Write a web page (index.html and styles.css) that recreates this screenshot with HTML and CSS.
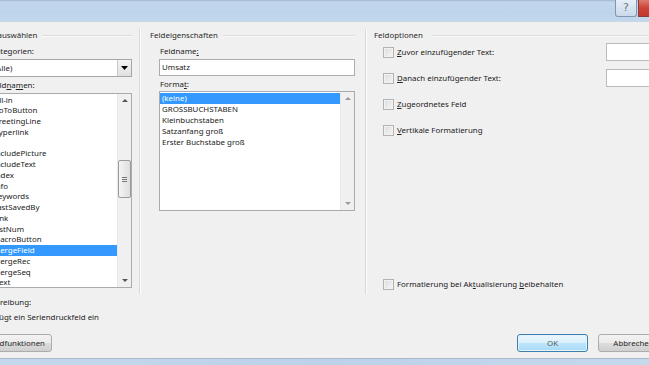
FILE: index.html
```html
<!DOCTYPE html>
<html lang="de">
<head>
<meta charset="utf-8">
<title>Feld</title>
<link rel="stylesheet" href="styles.css">
</head>
<body>
<div class="window">
  <div class="titlebar">
    <div class="tb-help">?</div>
    <div class="tb-close"></div>
  </div>
  <div class="client">
    <div class="panels">
      <div class="col col1">
        <div class="group-title"><span>Feld auswählen</span><i></i></div>
        <div class="label">Kategorien:</div>
        <div class="select">
          <span class="select-val">(Alle)</span>
          <span class="select-btn"><svg width="7" height="4" viewBox="0 0 7 4"><path d="M0 0h7L3.5 4z" fill="#000"/></svg></span>
        </div>
        <div class="label">Feld<u>n</u>a<u>m</u>en:</div>
        <div class="listbox list-fields">
          <ul class="items">
            <li>Fill-in</li>
            <li>GoToButton</li>
            <li>GreetingLine</li>
            <li>Hyperlink</li>
            <li>If</li>
            <li>IncludePicture</li>
            <li>IncludeText</li>
            <li>Index</li>
            <li>Info</li>
            <li>Keywords</li>
            <li>LastSavedBy</li>
            <li>Link</li>
            <li>ListNum</li>
            <li>MacroButton</li>
            <li class="sel">MergeField</li>
            <li>MergeRec</li>
            <li>MergeSeq</li>
            <li>Next</li>
          </ul>
          <div class="vscroll">
            <span class="arr up"></span>
            <span class="track"><span class="thumb"><b></b><b></b><b></b></span></span>
            <span class="arr down"></span>
          </div>
        </div>
      </div>
      <div class="col col2">
        <div class="group-title"><span>Feldeigenschaften</span><i></i></div>
        <div class="label">Feldname<u>:</u></div>
        <div class="textbox">Umsatz</div>
        <div class="label">Forma<u>t</u>:</div>
        <div class="listbox list-format">
          <ul class="items">
            <li class="sel">(keine)</li>
            <li>GROSSBUCHSTABEN</li>
            <li>Kleinbuchstaben</li>
            <li>Satzanfang groß</li>
            <li>Erster Buchstabe groß</li>
          </ul>
          <div class="vscroll disabled">
            <span class="arr up"></span>
            <span class="track"></span>
            <span class="arr down"></span>
          </div>
        </div>
      </div>
      <div class="col col3">
        <div class="group-title"><span>Feldoptionen</span><i></i></div>
        <div class="opt first"><span class="cb"></span><span class="opt-text"><u>Z</u>uvor einzufügender Text:</span><span class="opt-input"></span></div>
        <div class="opt"><span class="cb"></span><span class="opt-text"><u>D</u>anach einzufügender Text:</span><span class="opt-input"></span></div>
        <div class="opt"><span class="cb"></span><span class="opt-text"><u>Z</u>ugeordnetes Feld</span></div>
        <div class="opt"><span class="cb"></span><span class="opt-text"><u>V</u>ertikale Formatierung</span></div>
        <div class="opt last"><span class="cb"></span><span class="opt-text">Formatierung bei Ak<u>t</u>ualisierung <u>b</u>eibehalten</span></div>
      </div>
    </div>
    <div class="desc">
      <div class="desc-label">Beschreibung:</div>
      <div class="desc-text">Fügt ein Seriendruckfeld ein</div>
    </div>
    <div class="buttons">
      <div class="btn btn-fields">Feldfunktionen</div>
      <div class="btn btn-ok">OK</div>
      <div class="btn btn-cancel">Abbrechen</div>
    </div>
  </div>
  <div class="frame-bottom"></div>
</div>
</body>
</html>
```

FILE: styles.css
```css
* { box-sizing: border-box; }
html, body {
  margin: 0;
  padding: 0;
  width: 649px;
  height: 365px;
  overflow: hidden;
  background: #f0f0f0;
}
body {
  font-family: "Noto Sans", "Open Sans", sans-serif;
  font-size: 7.9px;
  color: #222;
}
u { text-decoration: underline; text-underline-offset: 1px; }

.window {
  margin-left: -30px;
  width: 711px;
  height: 365px;
  display: flex;
  flex-direction: column;
}

/* title bar: buttons laid out from the left, help starts at screen x 615 */
.titlebar {
  height: 22px;
  flex: none;
  display: flex;
  align-items: flex-start;
  gap: 1px;
  padding-left: 645px;
  background: linear-gradient(to bottom, #9fb8d3 0, #c2d7ec 2px, #bdd4ea 60%, #c3d8ed 100%);
  border-bottom: 1px solid #c9d6e3;
}
.tb-help {
  width: 22px;
  height: 17px;
  flex: none;
  border: 1px solid #8397ac;
  border-top: none;
  border-radius: 0 0 3px 3px;
  background: linear-gradient(to bottom, #e6eef7, #c9d9ea);
  color: #6b7785;
  font-family: "DejaVu Sans", sans-serif;
  font-size: 11px;
  line-height: 15px;
  text-align: center;
}
.tb-close {
  width: 43px;
  height: 17px;
  flex: none;
  border: 1px solid #8e3b3b;
  border-top: none;
  background: #c9463c linear-gradient(to bottom, #e07a70, #cc4238 50%, #c0392f);
}

/* client */
.client {
  flex: 1;
  display: flex;
  flex-direction: column;
}
.panels {
  display: flex;
  height: 265px;
  margin-top: 7px;
}
.col {
  display: flex;
  flex-direction: column;
}
.col1 {
  width: 169px;
  padding: 0 7px 0 10px;
}
.col2 {
  width: 226px;
  padding: 0 10px 0 10px;
  border-left: 1px solid #d9d9d9;
  box-shadow: inset 1px 0 0 #fbfbfb;
}
.col3 {
  flex: 1;
  padding: 0 0 0 8px;
  border-left: 1px solid #d9d9d9;
  box-shadow: inset 1px 0 0 #fbfbfb;
}

.group-title {
  height: 12px;
  display: flex;
  align-items: center;
  gap: 5px;
  line-height: 12px;
  color: #2a2a2a;
}
.col3 .group-title { gap: 9px; }
.group-title i {
  flex: 1;
  height: 1px;
  background: #dcdcdc;
  box-shadow: 0 1px 0 #fafafa;
}
.label {
  margin: 4px 0 0 11px;
  height: 12px;
  line-height: 12px;
}
.col2 .label { margin-left: 10px; }

/* select */
.select {
  margin: 2px 0 0 10px;
  height: 18px;
  border: 1px solid #a4a6ab;
  background: #fff;
  display: flex;
  align-items: center;
}
.select-val { flex: 1; padding-left: 3px; }
.select-btn {
  width: 14px;
  height: 16px;
  border-left: 1px solid #c9c9c9;
  background: linear-gradient(to bottom, #f4f4f4, #e1e1e1);
  display: flex;
  align-items: center;
  justify-content: center;
}
.col1 .label + .listbox { margin-top: 2px; }
.col1 .select + .label { margin-top: 2px; }

/* listbox */
.listbox {
  border: 1px solid #a9abb0;
  background: #fff;
  display: flex;
}
.list-fields {
  margin-left: 10px;
  height: 195px;
}
.list-format {
  margin: 1px 0 0 9px;
  height: 120px;
}
.items {
  list-style: none;
  margin: 0;
  padding: 0;
  flex: 1;
}
.list-fields .items { padding-top: 0.6px; }
.list-fields li {
  height: 10.76px;
  line-height: 10.76px;
  padding-left: 2px;
  white-space: nowrap;
}
.list-format .items { padding-top: 1px; }
.list-format li {
  height: 11px;
  line-height: 11px;
  padding-left: 2px;
  white-space: nowrap;
}
li.sel {
  background: #3399ff;
  color: #fff;
}

.vscroll {
  width: 14px;
  display: flex;
  flex-direction: column;
  background: #f0f0f0;
  border-left: 1px solid #e8e8e8;
}
.arr {
  height: 13px;
  display: flex;
  align-items: center;
  justify-content: center;
}
.arr::before {
  content: "";
  border-left: 3px solid transparent;
  border-right: 3px solid transparent;
}
.arr.up::before { border-bottom: 3px solid #555; }
.arr.down::before { border-top: 3px solid #555; }
.vscroll.disabled .arr.up::before { border-bottom-color: #9a9a9a; }
.vscroll.disabled .arr.down::before { border-top-color: #9a9a9a; }
.track {
  flex: 1;
  position: relative;
}
.thumb {
  position: absolute;
  left: 0;
  right: 0;
  top: 53px;
  height: 38px;
  border: 1px solid #9b9b9b;
  border-radius: 2px;
  background: linear-gradient(to right, #f4f4f4, #dedede);
  display: flex;
  flex-direction: column;
  align-items: center;
  justify-content: center;
  gap: 1px;
}
.thumb b {
  display: block;
  width: 5px;
  height: 1px;
  background: #777;
}

/* textbox */
.textbox {
  margin: 2px 0 0 9px;
  height: 17px;
  border: 1px solid #abadb3;
  background: #fff;
  padding-left: 2px;
  line-height: 15px;
}
.col2 .textbox + .label { margin-top: 2px; }

/* options */
.opt {
  height: 18px;
  display: flex;
  align-items: center;
  margin-top: 8px;
  padding-left: 9px;
}
.opt.first { margin-top: 2px; }
.opt.last { margin-top: auto; margin-bottom: 1px; }
.cb {
  width: 11px;
  height: 11px;
  border: 1px solid #b3b3b3;
  background: linear-gradient(135deg, #dcdcdc, #f6f6f6);
  box-shadow: inset 0 0 0 1px #f2f2f2;
  flex: none;
}
.opt-text {
  margin-left: 3px;
  white-space: nowrap;
}
.opt-input {
  margin-left: auto;
  width: 75px;
  height: 18px;
  border: 1px solid #b8bac0;
  border-right: none;
  background: #fff;
}

/* description */
.desc {
  padding-left: 8px;
  margin-top: 2px;
}
.desc-label { height: 12px; line-height: 12px; }
.desc-text { height: 12px; line-height: 12px; margin-top: 3px; padding-left: 17px; }

/* buttons */
.buttons {
  display: flex;
  align-items: center;
  margin-top: 11px;
  padding-left: 12px;
}
.btn {
  height: 18px;
  border: 1px solid #acacac;
  border-radius: 3px;
  background: linear-gradient(to bottom, #f2f2f2 0, #ebebeb 50%, #dddddd 51%, #cfcfcf 100%);
  display: flex;
  align-items: center;
  justify-content: center;
  color: #2a2a2a;
}
.btn-fields { width: 70px; }
.btn-ok {
  margin-left: auto;
  width: 71px;
  border-color: #3c7fb1;
  background: linear-gradient(to bottom, #eaf6fd 0, #d9f0fc 50%, #bee6fd 51%, #a7d9f5 100%);
  box-shadow: inset 0 0 0 1px #e6f3fb;
  color: #555;
}
.btn-cancel {
  margin-left: 10px;
  width: 71px;
  margin-right: 12px;
}

.frame-bottom {
  height: 7px;
  flex: none;
  border-top: 1px solid #aab9ca;
  background: linear-gradient(to right, #c5d8ec, #bcd2ea 50%, #c6d9ed);
}
```
